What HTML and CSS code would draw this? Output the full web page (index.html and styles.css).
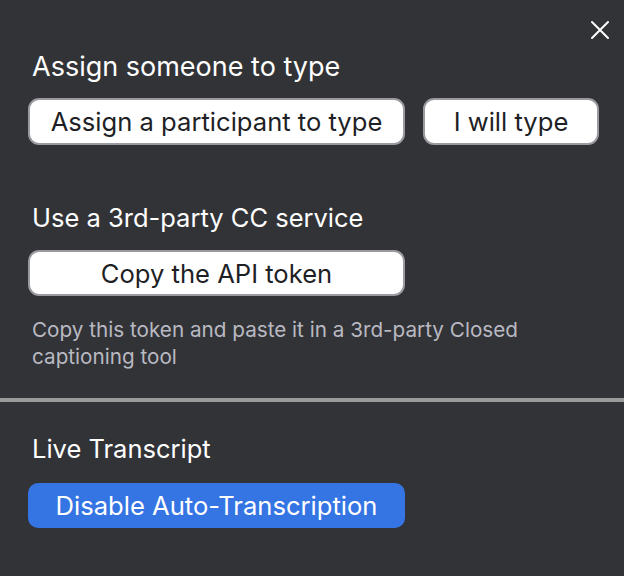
FILE: index.html
```html
<!DOCTYPE html>
<html>
<head>
<meta charset="utf-8">
<link rel="stylesheet" href="styles.css">
</head>
<body>
<div class="panel">
  <button class="close" aria-label="Close">
    <svg width="20" height="20" viewBox="0 0 20 20"><path d="M2 2 L18 18 M18 2 L2 18" stroke="#ffffff" stroke-width="2" stroke-linecap="round" fill="none"/></svg>
  </button>
  <section class="sec sec-assign">
    <h2 class="title title-lg">Assign someone to type</h2>
    <div class="row">
      <button class="btn btn-wide">Assign a participant to type</button>
      <button class="btn btn-self">I will type</button>
    </div>
  </section>
  <section class="sec sec-cc">
    <h2 class="title">Use a 3rd-party CC service</h2>
    <button class="btn btn-wide">Copy the API token</button>
    <p class="hint">Copy this token and paste it in a 3rd-party Closed captioning tool</p>
  </section>
  <hr class="divider">
  <section class="sec sec-live">
    <h2 class="title">Live Transcript</h2>
    <button class="btn btn-wide btn-primary">Disable Auto-Transcription</button>
  </section>
</div>
</body>
</html>
```
FILE: styles.css
```css
* { box-sizing: border-box; }
html, body {
  margin: 0;
  padding: 0;
  background: #323337;
  width: 624px;
  height: 576px;
  overflow: hidden;
}
body {
  font-family: Inter, "Liberation Sans", sans-serif;
  color: #ffffff;
}
.panel {
  position: relative;
  width: 624px;
  height: 576px;
}
.close {
  position: absolute;
  top: 20px;
  left: 590px;
  width: 20px;
  height: 20px;
  padding: 0;
  border: 0;
  background: none;
  display: block;
}
.close svg { display: block; }
.sec {
  padding: 0 0 0 28px;
  display: flex;
  flex-direction: column;
  align-items: flex-start;
}
.title {
  margin: 0;
  font-weight: 400;
  font-size: 25.5px;
  line-height: 30px;
  padding-left: 4px;
  color: #ffffff;
}
.sec-assign { padding-top: 52px; }
.sec-assign .title { font-size: 27px; }
.row {
  display: flex;
  gap: 18px;
  margin-top: 16px;
}
.btn {
  font-family: Inter, "Liberation Sans", sans-serif;
  font-size: 25.6px;
  height: 47px;
  border-radius: 11px;
  border: 2px solid #9a9aa0;
  background: #ffffff;
  color: #1f1f26;
  padding: 0;
  display: flex;
  align-items: center;
  justify-content: center;
}
.btn-wide { width: 377px; }
.btn-self { width: 176px; }
.sec-cc { padding-top: 58px; }
.sec-cc .btn { margin-top: 17px; height: 46px; }
.hint {
  margin: 20px 0 0 0;
  padding-left: 4px;
  font-size: 20.7px;
  line-height: 27px;
  color: #b9b9c2;
  width: 560px;
}
.divider {
  margin: 28px 0 0 0;
  border: 0;
  height: 4px;
  background: #9a9a9a;
}
.sec-live { padding-top: 32px; }
.btn-primary {
  margin-top: 19px;
  height: 45px;
  border: 0;
  background: #3574e3;
  color: #ffffff;
  border-radius: 10px;
}
```
